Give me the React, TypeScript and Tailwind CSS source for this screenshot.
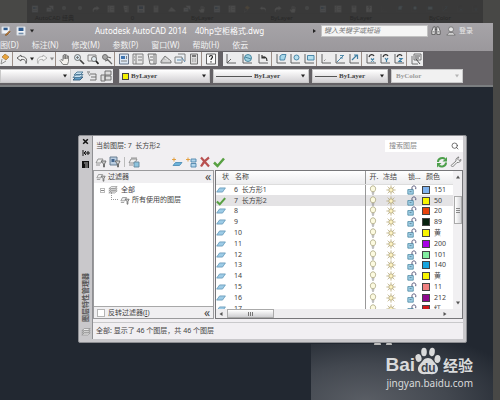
import React from 'react'
import { Search } from 'lucide-react'

type Layer = { name: string; label: string; swatch: string; current?: boolean }

const layers: Layer[] = [
  { name: '6  长方形1', label: '151', swatch: '#7fb2ee' },
  { name: '7  长方形2', label: '50', swatch: '#f8f500', current: true },
  { name: '8', label: '20', swatch: '#e8420c' },
  { name: '9', label: '89', swatch: '#07220f' },
  { name: '10', label: '黄', swatch: '#f8f500' },
  { name: '11', label: '200', swatch: '#a800e6' },
  { name: '12', label: '101', swatch: '#82eda0' },
  { name: '13', label: '140', swatch: '#18a5de' },
  { name: '14', label: '黄', swatch: '#f8f500' },
  { name: '15', label: '11', swatch: '#f08080' },
  { name: '16', label: '212', swatch: '#8e0a8e' },
  { name: '17', label: '红', swatch: '#d01818' },
]

const menus = ['图(D)', '标注(N)', '修改(M)', '参数(P)', '窗口(W)', '帮助(H)', '依云']

/* every toolbar glyph is drawn on a 12x12 grid */
const glyphs: Record<string, React.ReactNode> = {
  brush: <><path d="M6 1l4 3-3 3-4-3z" fill="#e8a33c" stroke="#b08448" /><path d="M3 6l-1 5 5-3" stroke="#888" /></>,
  undo: <path d="M5 2L1 5l4 3V6.500c3-.5 5 .5 5 4 2-5-1-7-5-7z" fill="#f5f5f5" stroke="#555" />,
  redo: <path d="M7 2l4 3-4 3V6.500c-3-.5-5 .5-5 4-2-5 1-7 5-7z" fill="#f5f5f5" stroke="#aaa" />,
  hand: <path d="M4 11.500L1 7.500l1-1 2 1V2.500h1V6 1.500h1.500V6 2H8v4l.5-3h1v5.500l-1 3z" fill="#f4f2ee" stroke="#777" />,
  zoom: <><circle cx="4.500" cy="4.500" r="3" fill="#d8e6ee" stroke="#666" /><path d="M7 7l4 4" stroke="#444" strokeWidth="1.700" /><path d="M3 4.500h3M4.500 3v3" stroke="#777" /></>,
  zoomWindow: <><path d="M1 2h8v6H1z" stroke="#777" /><circle cx="7" cy="6" r="2.500" fill="#e3edf2" stroke="#666" /><path d="M9 8l2.500 3" stroke="#222" strokeWidth="1.800" /></>,
  zoomPrev: <><circle cx="4" cy="4" r="2.500" fill="#aaa" stroke="#666" /><path d="M6 6l5 5M7 4l3 1M4 8l3-1" stroke="#666" strokeWidth="1.300" /></>,
  props: <><path d="M1.500 1h9v10h-9z" fill="#dce7f3" stroke="#5a6a80" /><path d="M3 3h4v3H3z" fill="#3e74b0" /><path d="M3 8h6M8.500 3v3" stroke="#777" /></>,
  center: <><path d="M1 1h10v10H1z" fill="#e6e6e6" stroke="#777" /><path d="M4 1v10M6 4h4M6 7h4M2 4h1M2 7h1" stroke="#777" /></>,
  palette: <><path d="M2 1h8v10H4z" fill="#eee" stroke="#666" /><path d="M8 1v10M4 4h3M4 7h3" stroke="#666" /></>,
  sheet: <><path d="M1 8l4-5 6 5v2H1z" fill="#c2c2c2" stroke="#777" /><path d="M3 8h7M5 5l3 2" stroke="#eee" /></>,
  markup: <><path d="M1 4h7v6H1zM4 1h7v7" fill="#e8eef3" stroke="#777" /><path d="M3 7h4M8 5l3 4" stroke="#4f81a8" /></>,
  calc: <><path d="M2.500 1h7v10h-7z" fill="#ddd" stroke="#666" /><path d="M4 3h4" stroke="#555" strokeWidth="1.500" /><path d="M4 6h4M4 8h4" stroke="#888" strokeDasharray="1 .5" /></>,
  help: <><path d="M1.500 1h9v10h-9z" fill="#fafafa" stroke="#555" /><path d="M4.500 4c0-2 3-2 3 0 0 1-1.500 1-1.500 3M6 8.300v1.200" stroke="#222" strokeWidth="1.200" /></>,
  ucs: <path d="M2 1v9h9M2 10l4-4" stroke="#555" />,
  ucsWorld: <><path d="M2 1v9h9" stroke="#555" /><circle cx="7" cy="5" r="3.500" fill="#9fd0e0" stroke="#3f7f98" /><path d="M4 4l6 2" stroke="#3f7f98" /></>,
  ucsPrev: <><path d="M2 1v9h9" stroke="#555" /><path d="M10 8c0-4-3-5-5-3M5 2v3h3" stroke="#333" strokeWidth="1.200" /></>,
  ucsFace: <><path d="M2 1v9h9" stroke="#555" /><path d="M5 3l2-1.500h4L9.500 7H5z" fill="#a8d8ea" stroke="#3e7fa3" /></>,
  ucsObj: <><path d="M2 1v9h9" stroke="#555" /><circle cx="7.500" cy="4.500" r="2.500" fill="#b7e0ee" stroke="#3e7fa3" /></>,
  ucsView: <><path d="M2 1v9h9" stroke="#555" /><path d="M4.500 2.500H11V7H4.500z" fill="#b7e0ee" stroke="#3e7fa3" /></>,
  ucsOrigin: <><path d="M2 1v9h9" stroke="#555" /><path d="M4 8l1.500-1.500" stroke="#888" /></>,
  ucsZ: <><path d="M2 1v9h9" stroke="#555" /><path d="M3 9l6-6M6 2.500h4M6 5h3" stroke="#3e7fa3" /></>,
  ucs3: <><path d="M2 1v9h9" stroke="#555" /><path d="M4 7l5-5M6 2h3.500v4" stroke="#3e7fa3" strokeWidth="1.200" /></>,
  rotX: <><path d="M2 1v9h9" stroke="#555" /><path d="M4 4c1-3 4-3 5-1" stroke="#333" strokeWidth="1.300" /><path d="M6 5.500l3 3M9 5.500l-3 3" stroke="#3e7fa3" strokeWidth="1.200" /></>,
  rotY: <><path d="M2 1v9h9" stroke="#555" /><path d="M4 4c1-3 4-3 5-1" stroke="#333" strokeWidth="1.300" /><path d="M6 5l1.500 2L9 5M7.500 7v2" stroke="#3e7fa3" strokeWidth="1.200" /></>,
  rotZ: <><path d="M2 1v9h9" stroke="#555" /><path d="M4 4c1-3 4-3 5-1" stroke="#333" strokeWidth="1.300" /><path d="M6 5.500h3l-3 3h3" stroke="#3e7fa3" strokeWidth="1.200" /></>,
  apply: <><path d="M2 3v8h6M4 1h7v6H4z" stroke="#666" /><path d="M5 3h5M5 5h4M6 6l4 5" stroke="#444" /></>,
  layerProps: <><path d="M1 10l3-3h7l-3 3z" fill="#5f9cc6" stroke="#365a78" /><path d="M1 7.500l3-3h7l-3 3zM2 5l3-3h6L8 5z" fill="#c9e2f1" stroke="#4b7694" /></>,
  layerCur: <><path d="M1 2h3M4 4h6M5 7h5M4 10h6M10 4v6" stroke="#666" /><path d="M2 3l2 3" stroke="#888" /></>,
  layerPrev: <path d="M5 1h6v4H5zM5 6h6v4H5zM1 5h4v6H1z" fill="#ddd" stroke="#666" />,
  filter: <><path d="M1 7l2-4h5L6 7zM1 9h4" fill="#eee" stroke="#888" /><path d="M6 5h5L9.500 8v3h-1V8z" fill="#ccc" stroke="#666" /></>,
  group: <><path d="M1 1h7v8H1z" fill="#b9cce0" stroke="#5f7488" /><path d="M2.500 3h3v3h-3z" fill="#44668e" /><path d="M6 5h5L9.500 8v3h-1V8z" fill="#ddd" stroke="#666" /></>,
  states: <><path d="M1 7l2-4h6L7 7zM1 9h4M3 2h6" fill="#eee" stroke="#888" /><path d="M6 6h5v5H6z" fill="#8ec4de" stroke="#65889c" /></>,
  newLayer: <><path d="M2 9.500l2.500-3H11L8.500 9.500z" fill="#6fb3da" stroke="#4e8fb8" /><path d="M3 1.500v4M1 3.500h4" stroke="#e29a33" /></>,
  newFrozen: <><path d="M6 3h5v3H6zM6 7.500h5v3.500H6z" fill="#b3d6ec" stroke="#4e86ad" /><path d="M3 1.500v4M1 3.500h4" stroke="#e29a33" /></>,
  del: <path d="M2 1.500l8 9M10 1.500c-3 2-6 5-8 9" stroke="#b85050" strokeWidth="2.200" />,
  check: <path d="M1 6.500L4.500 10 11 2.500" stroke="#58a043" strokeWidth="2.500" />,
  refresh: <><path d="M2 6c0-4 5-5 7-3" stroke="#4c9f4a" strokeWidth="2" /><path d="M11 1v4.500H6.500z" fill="#4c9f4a" /><path d="M10 6.500c0 4-5 5-7 3" stroke="#4c9f4a" strokeWidth="2" /><path d="M1 11.500V7h4.500z" fill="#4c9f4a" /></>,
  wrench: <path d="M1 9.500l5-4.500c-.5-2 1-4 3-4l-1.500 2 1.500 1.500 2-1c0 2-2 3.500-4 3L2.500 11z" fill="#f1f1f1" stroke="#777" />,
  stack: <path d="M1 9.500L4 7h7l-3 2.500zM1 7L4 4.500h7L8 7zM1 4.500L4 2h7L8 4.500z" fill="#f8f8f8" stroke="#888" />,
  layer: <path d="M.8 8.500l3.500-5h7l-3.500 5z" fill="#9ccbe6" stroke="#5c92b4" />,
  bulb: <><path d="M4.500 8C1.500 5 3 1 6 1s4.500 4 1.500 7z" fill="#fcfae0" stroke="#a09a72" /><path d="M4.500 9.500h3M5 11h2" stroke="#777" /></>,
  sun: <><circle cx="6" cy="6" r="2.700" fill="#fdf3c4" stroke="#9c9060" /><path d="M6 .5v2M6 9.500v2M.5 6h2M9.500 6h2M2 2l1.500 1.500M8.500 8.500L10 10M10 2L8.500 3.500M3.500 8.500L2 10" stroke="#b4a470" /></>,
  lock: <><path d="M1 5.500h6.500v5.500H1z" fill="#a5d3ea" stroke="#3f7f9a" /><path d="M6 5.500V3c0-2.500 4.500-2.500 4.500 0v2" stroke="#557" strokeWidth="1.200" /><path d="M3 8h2.500" stroke="#467" /></>,
  person: <><circle cx="6" cy="4" r="3" fill="#e6e6e6" stroke="#666" /><path d="M1 11c1-2 3-3 3-3h4s2 1 3 3z" fill="#ddd" stroke="#666" /></>,
  binoculars: <path d="M1 10V6l2-5h2v9zM7 10V1h2l2 5v4zM5 4h2M2 7h2M8 7h2" fill="#eee" stroke="#444" />,
  save: <><path d="M1 1h10v10H1z" fill="#f3f5f8" stroke="#c7ccd4" /><path d="M3 2h6v4H3z" fill="#2f5c90" /><path d="M3 8h6v2H3z" fill="#7590ac" /></>,
  saveAs: <><path d="M1 1h9v8H1z" fill="#f3f5f8" stroke="#c7ccd4" /><path d="M3 2h5v3H3z" fill="#2f5c90" /><path d="M5 11l5-5 1 1-4 4z" fill="#c9823a" stroke="#805020" /></>,
}

const Glyph: React.FC<{ name: string; className?: string }> = ({ name, className = 'size-3' }) => (
  <svg viewBox="0 0 12 12" fill="none" strokeWidth=".9" className={`shrink-0 ${className}`} aria-hidden="true">
    {glyphs[name]}
  </svg>
)

const Tool: React.FC<{ name: string; className?: string }> = ({ name, className = 'w-[14px]' }) => (
  <button type="button" aria-label={name} className={`flex h-full shrink-0 items-center justify-center ${className}`}>
    <Glyph name={name} />
  </button>
)

const Arrow: React.FC<{ className?: string }> = ({ className = 'text-[#222]' }) => (
  <svg viewBox="0 0 6 4" className={`h-1 w-1.5 shrink-0 ${className}`} aria-hidden="true">
    <path d="M1 .5h4L3 3.500z" fill="currentColor" />
  </svg>
)

const Divider = () => <span className="h-full w-[3px] shrink-0 border-l border-[#9c8f88]" />

const Combo: React.FC<{ label: string; value: string; width: string; disabled?: boolean; children?: React.ReactNode }> = ({
  label, value, width, disabled, children,
}) => (
  <label className={`flex h-full items-center gap-0.5 border border-[#c9c9c9] px-0.5 ${width} ${disabled ? 'bg-[#f1f1f1] pl-1 text-[#999]' : 'bg-linear-to-b from-white to-[#d3d1d4] text-[#444]'}`}>
    {children}
    <select aria-label={label} disabled={disabled} className="min-w-0 flex-1 appearance-none bg-transparent font-['Liberation_Serif',serif] text-[7px] leading-3 font-bold opacity-100">
      <option>{value}</option>
    </select>
    <Arrow className={disabled ? 'text-[#b5b5b5]' : 'text-[#222]'} />
  </label>
)

const backdropIcons = [
  'props', 'markup', 'zoom', 'zoom', 'redo', 'center', 'palette', 'save', 'calc', 'sheet', 'markup', 'hand', 'props', 'center', 'brush',
  'undo', 'redo', 'hand', 'zoom', 'props', 'center', 'calc', 'help', 'ucs', 'ucsFace', 'ucsObj', 'ucsView', 'ucsZ', 'rotX', 'rotY',
]

const Backdrop = () => (
  <div className="flex h-[23px] pr-[17px] pl-[27px]" aria-hidden="true">
    <div className="flex min-w-0 flex-1 flex-col bg-[#393939] pt-1 text-[6px] leading-2 whitespace-nowrap text-[#282828]">
      <div className="mx-1 flex h-2.5 items-center justify-between border-b border-[#303030] opacity-10">
        {backdropIcons.map((g, i) => <Glyph key={i} name={g} className="size-2" />)}
      </div>
      <div className="flex h-2 justify-between pr-8 pl-2">
        <span>AutoCAD 经典</span>
        <span>0</span>
        <span>ByLayer</span>
        <span>ByLayer</span>
        <span>ByLayer</span>
        <span>ByColor</span>
      </div>
    </div>
  </div>
)

const TitleArea = () => (
  <header className="bg-linear-to-b from-[#a6a4a8] to-[#9b989c] text-white">
    <div className="flex h-[15px] items-center pl-px">
      <Glyph name="saveAs" className="size-2.5" />
      <Glyph name="save" className="ml-[5px] size-2.5" />
      <span className="ml-[3px] flex"><Arrow /></span>
      <h1 className="ml-[60px] w-[218px] text-[8px] leading-3 whitespace-pre">Autodesk AutoCAD 2014    40hp空柜格式.dwg</h1>
      <svg viewBox="0 0 4 6" className="mr-1 h-1.5 w-1" aria-hidden="true"><path d="M0 1v4l3-2z" fill="#222" /></svg>
      <input aria-label="键入关键字或短语" placeholder="键入关键字或短语" className="h-3 w-[107px] border border-[#c2c2c2] bg-[#f5f5f5] px-0.5 text-[7px] leading-2 italic placeholder:text-[#777]" />
      <Glyph name="binoculars" className="ml-[3px] size-2.5" />
      <Glyph name="person" className="ml-[5px] size-2.5" />
      <a href="#" className="ml-[3px] text-[7px] leading-3 text-[#e8e8e8]">登录</a>
    </div>
    <nav className="flex h-[13px] gap-[13px] text-[8px] leading-3 text-[#f1f1f1]">
      {menus.map((m) => <button type="button" key={m} className="shrink-0">{m}</button>)}
    </nav>
  </header>
)

const Toolbars = () => (
  <div className="flex flex-col gap-[3px] border-b-2 border-[#7b7e80] bg-[#656266] pt-px pb-0.5">
    <div className="flex h-[14px] gap-[5px]">
      <div className="-ml-0.5 flex bg-[#ececed]">
        <Tool name="brush" />
        <Divider />
        <Tool name="undo" />
        <span className="flex items-center"><Arrow /></span>
        <Tool name="redo" />
        <span className="flex items-center"><Arrow className="text-[#888]" /></span>
        <Divider />
        {['hand', 'zoom', 'zoomWindow', 'zoomPrev'].map((n) => <Tool key={n} name={n} />)}
        <Divider />
        {['props', 'center', 'palette', 'sheet', 'markup', 'calc'].map((n) => <Tool key={n} name={n} />)}
        <Divider />
        <Tool name="help" />
      </div>
      <div className="flex bg-[#ececed]">
        {['ucs', 'ucsWorld', 'ucsPrev'].map((n) => <Tool key={n} name={n} className="w-4" />)}
        <Divider />
        {['ucsFace', 'ucsObj', 'ucsView'].map((n) => <Tool key={n} name={n} />)}
        <Divider />
        {['ucsOrigin', 'ucsZ', 'ucs3'].map((n) => <Tool key={n} name={n} />)}
        <Divider />
        {['rotX', 'rotY', 'rotZ'].map((n) => <Tool key={n} name={n} />)}
        <Divider />
        <Tool name="apply" />
      </div>
    </div>
    <div className="flex h-[14px]">
      <Combo label="图层" value="" width="w-[71px]" />
      <div className="mr-[6px] flex bg-[#e6e6e8]">
        {['layerProps', 'layerCur', 'layerPrev'].map((n) => <Tool key={n} name={n} />)}
      </div>
      <div className="flex gap-[3px]">
        <Combo label="颜色控制" value="ByLayer" width="w-[91px]">
          <span className="size-[7px] border border-[#444] bg-[#f3f000]" />
        </Combo>
        <Combo label="线型控制" value="ByLayer" width="w-[96px]">
          <span className="w-[36px] border-t border-[#555]" />
        </Combo>
        <Combo label="线宽控制" value="ByLayer" width="w-[76px]">
          <span className="w-[22px] border-t border-[#555]" />
        </Combo>
        <Combo label="打印样式控制" value="ByColor" width="w-[72px]" disabled />
      </div>
    </div>
  </div>
)

const FilterPane = () => (
  <section className="flex w-[121px] shrink-0 flex-col border border-[#9a9a9c] bg-white">
    <div className="flex h-3 items-center gap-0.5 bg-[#f0eff1] px-0.5">
      <Glyph name="filter" className="size-2.5" />
      <h2>过滤器</h2>
      <button type="button" aria-label="折叠" className="ml-auto text-[12px] leading-2">«</button>
    </div>
    <ul className="flex-1 pt-0.5 pl-1.5">
      <li>
        <div className="flex h-[10px] items-center gap-[3px]">
          <span className="flex size-[5px] items-center justify-center border border-[#bbb]"><span className="h-px w-[3px] bg-[#888]" /></span>
          <Glyph name="stack" className="size-2.5" />
          全部
        </div>
        <ul className="pl-[11px]">
          <li className="flex h-[10px] items-center gap-0.5">
            <span className="-mt-2 h-2 w-[7px] border-b border-l border-dotted border-[#999]" />
            <Glyph name="filter" className="size-2.5" />
            所有使用的图层
          </li>
        </ul>
      </li>
    </ul>
    <div className="flex h-3 items-center border-t border-[#a8a8a8] bg-[#f0eff1] px-[3px]">
      <label className="flex items-center gap-[3px]">
        <input type="checkbox" className="size-2 appearance-none border border-[#b5b5b5] bg-white" />
        <span>反转过滤器(<u>I</u>)</span>
      </label>
      <button type="button" aria-label="收起" className="ml-auto text-[12px] leading-2">«</button>
    </div>
  </section>
)

const LayerList = () => (
  <section className="flex min-w-0 flex-1 flex-col border border-[#77777a] bg-white">
    <div className="flex h-[138px]">
      <div className="min-w-0 flex-1 overflow-hidden">
        <table className="h-[143px] w-full table-fixed border-collapse text-left">
          <thead>
            <tr className="h-[13px] bg-linear-to-b from-white to-[#ececee] font-normal">
              <th className="w-[17px] border-b border-[#ddd] pl-1.5 font-normal">状</th>
              <th className="border-b border-[#ddd] pl-0.5 font-normal">名称</th>
              <th className="w-[14px] border-b border-l border-[#ddd] border-l-[#999] pl-1 font-normal whitespace-nowrap">开.</th>
              <th className="w-[25px] border-b border-[#ddd] pl-1 font-normal">冻结</th>
              <th className="w-[18px] border-b border-[#ddd] pl-1 font-normal whitespace-nowrap">锁...</th>
              <th className="w-[31px] border-b border-[#ddd] pl-1 font-normal">颜色</th>
            </tr>
          </thead>
          <tbody>
            {layers.map((l) => (
              <tr key={l.name} className={l.current ? 'bg-[#e4e3e5]' : ''}>
                <td><Glyph name={l.current ? 'check' : 'layer'} className="size-2.5" /></td>
                <td className="pl-px whitespace-pre">{l.name}</td>
                <td className="border-l border-[#999] pl-0.5"><Glyph name="bulb" className="size-2.5" /></td>
                <td className="pl-[7px]"><Glyph name="sun" className="size-2.5" /></td>
                <td className="pl-[3px]"><Glyph name="lock" className="size-2.5" /></td>
                <td>
                  <div className="flex items-center gap-1">
                    <span className="size-2 shrink-0 border border-[#444]" style={{ backgroundColor: l.swatch }} />
                    {l.label}
                  </div>
                </td>
              </tr>
            ))}
          </tbody>
        </table>
      </div>
      <div className="flex w-[9px] shrink-0 flex-col items-center bg-[#f1f0f2] py-1" aria-hidden="true">
        <Arrow className="rotate-180 text-[#555]" />
        <span className="mt-[17px] flex h-7 w-2 flex-col items-center justify-center gap-px border border-[#aaa] bg-linear-to-r from-white to-[#d5d5d8]">
          <i className="h-px w-1 bg-[#888]" /><i className="h-px w-1 bg-[#888]" /><i className="h-px w-1 bg-[#888]" />
        </span>
        <span className="mt-auto flex"><Arrow className="text-[#555]" /></span>
      </div>
    </div>
    <div className="flex h-[9px] items-center bg-[#eeedef] pr-3.5 pl-0.5" aria-hidden="true">
      <Arrow className="rotate-90 text-[#555]" />
      <span className="ml-[3px] flex h-[9px] w-[47px] items-center justify-center gap-px border border-[#aaa] bg-linear-to-b from-white to-[#cfcfd2]">
        <i className="h-1 w-px bg-[#777]" /><i className="h-1 w-px bg-[#777]" /><i className="h-1 w-px bg-[#777]" />
      </span>
      <span className="ml-auto flex"><Arrow className="-rotate-90 text-[#555]" /></span>
    </div>
  </section>
)

const LayerPalette = () => (
  <div className="absolute top-[48px] right-[26px] left-[78px] flex rounded-xs border border-[#8d8e92] bg-[#c9c8cb] pr-[3px] pb-[3px] text-[7px] leading-2 text-[#444]">
    <div className="flex w-[13px] shrink-0 flex-col items-center gap-[5px] pt-0.5">
      <svg viewBox="0 0 6 6" className="size-[7px]" aria-hidden="true"><path d="M1 1l4 4M5 1L1 5" stroke="#111" strokeWidth="1.300" /></svg>
      <svg viewBox="0 0 8 6" className="h-1.5 w-2" aria-hidden="true"><path d="M1 0v6M2 3h6M6 1v4M4 1L2 3l2 2" stroke="#111" fill="none" /></svg>
      <svg viewBox="0 0 7 7" className="size-[7px]" aria-hidden="true"><path d="M0 0h7v7H0z" fill="#111" /><path d="M2 2h4M3 4h3M3 6h3" stroke="#ddd" strokeWidth=".8" /></svg>
      <span className="mt-auto rotate-180 text-[7px] leading-2 font-bold text-[#555] [writing-mode:vertical-rl] [text-orientation:sideways]">图层特性管理器</span>
      <Glyph name="stack" className="mb-0.5 size-2.5" />
    </div>
    <div className="min-w-0 flex-1 border-l border-[#8f8f93] bg-[#f1eff2] pt-[3px]">
      <div className="flex h-[14px] items-center justify-between pl-[3px]">
        <p className="whitespace-pre">当前图层: 7  长方形2</p>
        <label className="flex h-3 w-[78px] items-center bg-white px-1">
          <input type="search" aria-label="搜索图层" placeholder="搜索图层" className="min-w-0 flex-1 text-[7px] leading-2 placeholder:text-[#888]" />
          <Search className="size-2 text-[#333]" />
        </label>
      </div>
      <div className="flex h-[17px] items-center pl-px">
        <Tool name="filter" />
        <Tool name="group" />
        <span className="mx-0.5 h-2.5 border-l border-[#bbb]" />
        <Tool name="states" />
        <span className="w-[29px]" />
        {['newLayer', 'newFrozen', 'del', 'check'].map((n) => <Tool key={n} name={n} />)}
        <span className="flex-1" />
        <Tool name="refresh" />
        <Tool name="wrench" />
      </div>
      <div className="flex gap-px">
        <FilterPane />
        <LayerList />
      </div>
      <p className="mt-[3px] border-t border-[#c9c9cb] px-[3px] py-1">全部: 显示了 46 个图层，共 46 个图层</p>
    </div>
  </div>
)

const Watermark = () => (
  <div className="absolute right-0 bottom-0 left-[311px] flex h-[57px] flex-col items-end bg-[radial-gradient(ellipse_at_30%_100%,#5a5e65_0%,#434850_45%,#222831_90%)] pt-[3px] pr-[20px] text-[#d9dadb]">
    <svg viewBox="0 0 20 4" className="absolute top-[-3px] left-[63px] h-1 w-5" aria-hidden="true">
      <path d="M0 4a3.500 3.500 0 0 1 7 0zM12 4a3 3 0 0 1 6 0z" fill="#bbb" />
    </svg>
    <div className="flex h-7 items-end">
      <span className="font-['Liberation_Sans',sans-serif] text-[19px] leading-5 font-bold">Bai</span>
      <svg viewBox="0 0 26 28" className="h-7 w-[26px]" role="img" aria-label="Baidu">
        <ellipse cx="3.500" cy="11" rx="3" ry="4" transform="rotate(-15 3.500 11)" fill="currentColor" />
        <ellipse cx="9" cy="5" rx="2.800" ry="4.200" fill="currentColor" />
        <ellipse cx="17" cy="5" rx="2.800" ry="4.200" transform="rotate(8 17 5)" fill="currentColor" />
        <ellipse cx="22.500" cy="12" rx="3" ry="4" transform="rotate(10 22.500 12)" fill="currentColor" />
        <path d="M13 11c4 0 5 3 7 5 3 3 4 6 2 9-2 3-6 2-9 2s-7 1-9-2c-2-3-1-6 2-9 2-2 3-5 7-5z" fill="currentColor" />
        <text x="6" y="24.500" fontSize="12" fontWeight="700" fontFamily="Liberation Sans" fill="#41464e">du</text>
      </svg>
      <span className="ml-0.5 text-[15px] leading-5 font-bold">经验</span>
    </div>
    <a href="#" className="text-[10px] leading-4">jingyan.baidu.com</a>
  </div>
)

const App: React.FC = () => {
  return (
    <main className="flex min-h-screen flex-col overflow-hidden bg-[#484846] font-['Noto_Sans','Noto_Sans_CJK_SC',sans-serif]">
      <Backdrop />
      <div className="mr-[7px] flex flex-1 flex-col">
        <TitleArea />
        <Toolbars />
        <div className="relative min-h-[314px] flex-1 bg-[#222831]">
          <Watermark />
          <LayerPalette />
        </div>
      </div>
    </main>
  )
}

export default App
